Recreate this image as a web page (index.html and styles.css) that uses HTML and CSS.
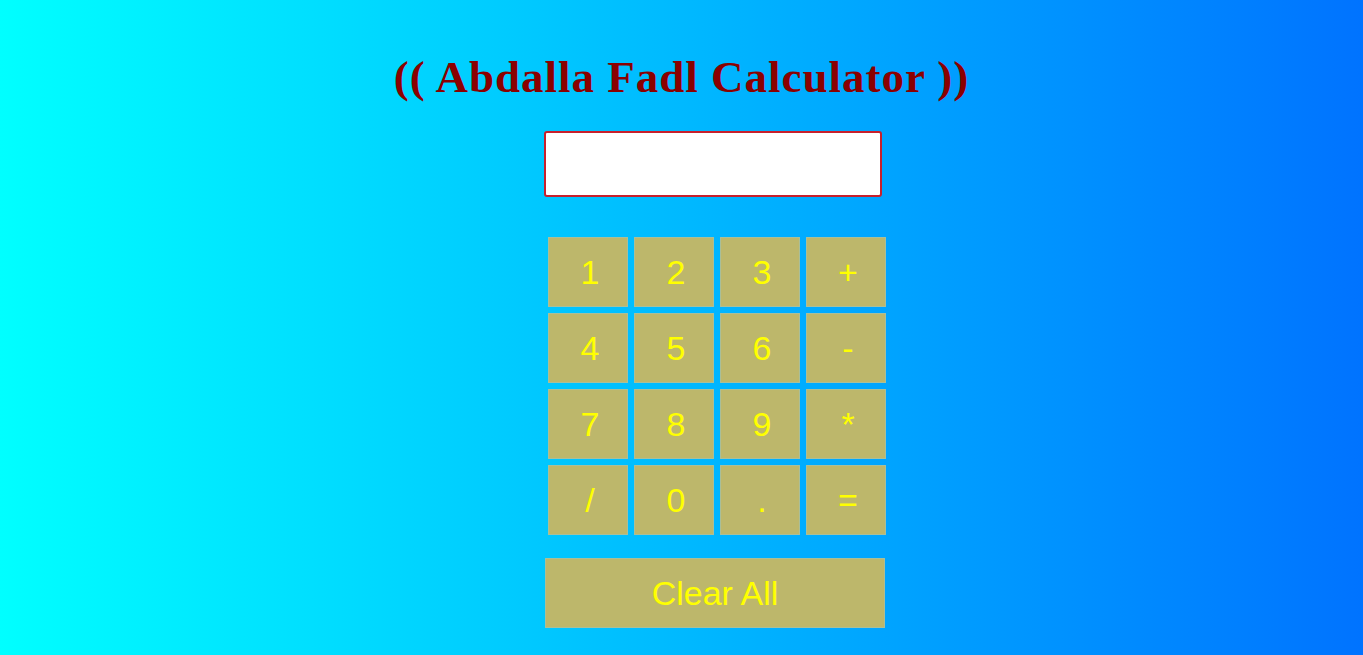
FILE: index.html
```html
<!DOCTYPE html>
<html>
<head>
<meta charset="utf-8">
<title>Calculator</title>
<link rel="stylesheet" href="styles.css">
</head>
<body>
<h1 class="title">(( Abdalla Fadl Calculator ))</h1>
<div class="calc">
  <input class="screen" type="text">
  <div class="keys">
    <button class="key">1</button>
    <button class="key">2</button>
    <button class="key">3</button>
    <button class="key">+</button>
    <button class="key">4</button>
    <button class="key">5</button>
    <button class="key">6</button>
    <button class="key">-</button>
    <button class="key">7</button>
    <button class="key">8</button>
    <button class="key">9</button>
    <button class="key">*</button>
    <button class="key">/</button>
    <button class="key">0</button>
    <button class="key">.</button>
    <button class="key">=</button>
  </div>
  <button class="clear">Clear All</button>
</div>
</body>
</html>
```
FILE: styles.css
```css
html, body {
  margin: 0;
  padding: 0;
  height: 100%;
}
body {
  background: linear-gradient(to right, #00ffff 0%, #0073ff 100%);
  font-family: "Liberation Sans", Arial, sans-serif;
  overflow: hidden;
}
.title {
  margin: 0;
  padding-top: 53px;
  text-align: center;
  font-family: "Liberation Serif", "Times New Roman", serif;
  font-weight: bold;
  font-size: 45px;
  letter-spacing: 1px;
  line-height: 48px;
  color: #8b0000;
}
.calc {
  width: 342px;
  margin: 30px 0 0 544px;
  display: flex;
  flex-direction: column;
}
.screen {
  box-sizing: border-box;
  width: 338px;
  height: 66px;
  border: 2px solid #c8202c;
  border-radius: 3px;
  background: #fff;
  outline: none;
  padding: 0;
}
.keys {
  margin: 40px 0 0 4px;
  display: grid;
  grid-template-columns: repeat(4, 80px);
  grid-auto-rows: 70px;
  gap: 6px;
}
.key, .clear {
  box-sizing: border-box;
  background: #bdb76b;
  border: 1px solid #a9bf9a;
  color: #ffff00;
  font-family: "Liberation Sans", Arial, sans-serif;
  font-size: 34px;
  padding: 0;
  cursor: pointer;
}
.key {
  padding-left: 4px;
}
.clear {
  margin: 23px 0 0 1px;
  width: 340px;
  height: 70px;
}
```
